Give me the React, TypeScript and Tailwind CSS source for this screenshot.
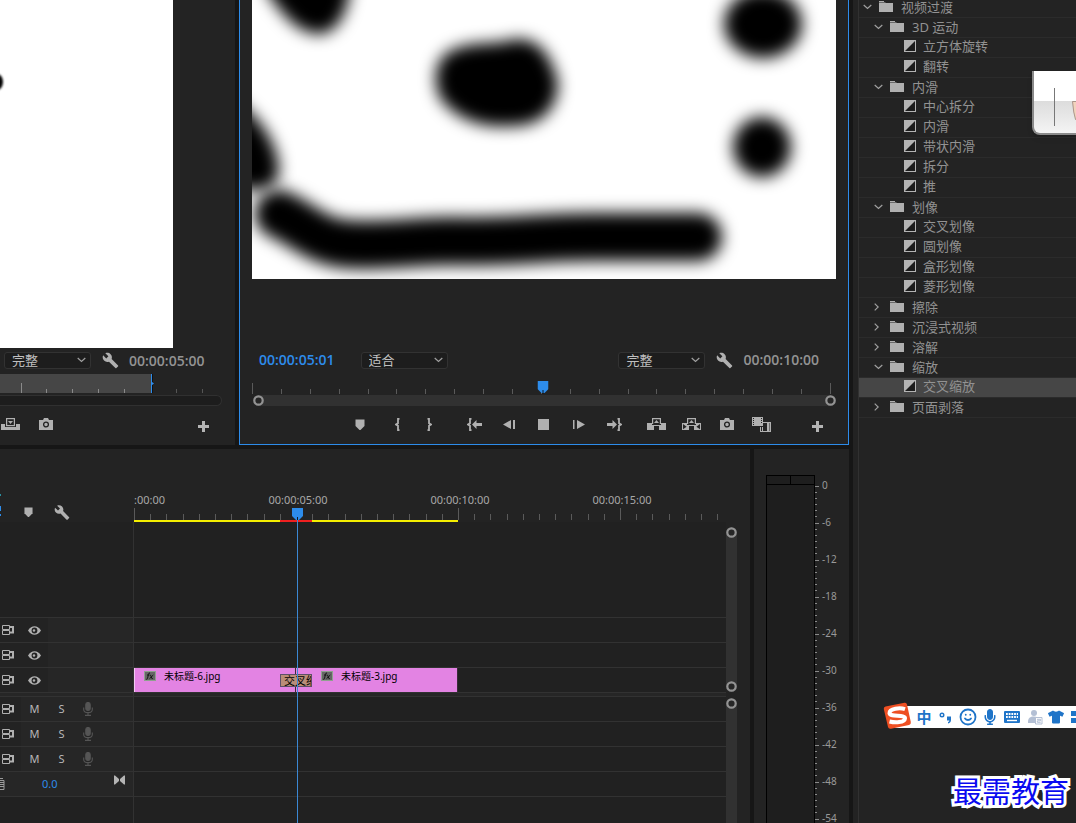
import React from "react";
import { FaMicrophone, FaTshirt } from "react-icons/fa";
import { MdBuild } from "react-icons/md";
import { Smile } from "lucide-react";

const range = (n: number) => Array.from({ length: n }, (_, i) => i);

/* ---------- icons ---------- */

const Chevron = ({ open = true }: { open?: boolean }) =>
  open ? (
    <svg width="9" height="6" viewBox="0 0 9 6" fill="none" stroke="#a0a0a0" strokeWidth="1.2">
      <path d="M.7 1l3.8 3.5L8.3 1" />
    </svg>
  ) : (
    <svg width="5" height="8" viewBox="0 0 5 8" fill="none" stroke="#a0a0a0" strokeWidth="1.2">
      <path d="M.7.6L4.2 4 .7 7.4" />
    </svg>
  );

const Folder = () => (
  <svg width="14" height="11" viewBox="0 0 14 11" fill="#b0b0b0">
    <path d="M0 0h5v1H0zM0 2h14v9H0z" />
    <path d="M0 1h6l1 1H0z" fill="#6a6a6a" />
  </svg>
);

const TransitionIcon = () => (
  <svg width="12" height="12" viewBox="0 0 12 12">
    <rect x=".5" y=".5" width="11" height="11" fill="#1c1c1c" stroke="#b4b4b4" />
    <path d="M0 0h12L0 12z" fill="#b4b4b4" />
  </svg>
);

const MarkerIcon = ({ size = 10 }: { size?: number }) => (
  <svg width={size} height={size + 1} viewBox="0 0 10 11" fill="#b0b0b0">
    <path d="M.5.5h9V7L5.500 11h-1L.5 7z" />
  </svg>
);

const Wrench = () => <MdBuild size={17} color="#b0b0b0" />;

const Ring = () => (
  <svg className="block shrink-0" width="11" height="11" viewBox="0 0 11 11">
    <circle cx="5.5" cy="5.5" r="4.2" fill="#262626" stroke="#939393" strokeWidth="2.2" />
  </svg>
);

const Playhead = () => (
  <svg className="block" width="11" height="13" viewBox="0 0 11 13">
    <path d="M0 0h11v8l-4 4H4L0 8z" fill="#2d8ceb" />
    <path d="M5 9h1v4H5z" fill="#101820" />
  </svg>
);

const CameraIcon = () => (
  <svg width="14" height="12" viewBox="0 0 14 12" fill="#b0b0b0">
    <path d="M0 2h4l1-2h4l1 2h4v10H0z" />
    <circle cx="7" cy="6.5" r="2.4" fill="none" stroke="#232323" strokeWidth="1.3" />
  </svg>
);

const PlusIcon = () => (
  <svg width="11" height="15" viewBox="0 0 11 15" fill="#b4b4b4">
    <path d="M4 4h3v4h4v3H7v4H4v-4H0V8h4z" />
  </svg>
);

const OverwriteIcon = () => (
  <svg width="19" height="12" viewBox="0 0 19 12" fill="#b0b0b0">
    <path d="M0 6h4v3h11V6h4v6H0z" />
    <rect x="5.6" y=".6" width="7.8" height="7" fill="#232323" stroke="#b0b0b0" strokeWidth="1.2" />
    <path d="M7 3h5L9.5 6z" />
  </svg>
);

const BraceOpen = () => (
  <svg width="5" height="13" viewBox="0 0 5 13" fill="none" stroke="#b0b0b0" strokeWidth="1.8">
    <path d="M4.5.8H3v4.4L1 6.5l2 1.3v4.4h1.5" />
  </svg>
);

const BraceClose = () => (
  <svg width="5" height="13" viewBox="0 0 5 13" fill="none" stroke="#b0b0b0" strokeWidth="1.8">
    <path d="M.5.8H2v4.4l2 1.3-2 1.3v4.4H.5" />
  </svg>
);

const GoToIn = () => (
  <svg width="15" height="13" viewBox="0 0 15 13">
    <path d="M4.5.8H3v4.4L1 6.5l2 1.3v4.4h1.5" fill="none" stroke="#b0b0b0" strokeWidth="1.8" />
    <path d="M5 6.5L9.5 2v3H15v3H9.5v3z" fill="#b0b0b0" />
  </svg>
);

const GoToOut = () => (
  <svg width="15" height="13" viewBox="0 0 15 13">
    <path d="M10.5.8H12v4.4l2 1.3-2 1.3v4.4h-1.5" fill="none" stroke="#b0b0b0" strokeWidth="1.8" />
    <path d="M10 6.5L5.5 2v3H0v3h5.5v3z" fill="#b0b0b0" />
  </svg>
);

const StepBack = () => (
  <svg width="12" height="9" viewBox="0 0 12 9" fill="#b0b0b0">
    <path d="M0 4.5L8 0v9zM10 0h2v9h-2z" />
  </svg>
);

const StepForward = () => (
  <svg width="12" height="9" viewBox="0 0 12 9" fill="#b0b0b0">
    <path d="M12 4.5L4 0v9zM0 0h1.5v9H0z" />
  </svg>
);

const StopIcon = () => (
  <svg width="11" height="11" viewBox="0 0 11 11">
    <path d="M0 0h11v11H0z" fill="#b0b0b0" />
  </svg>
);

const LiftIcon = () => (
  <svg width="19" height="12" viewBox="0 0 19 12" fill="#b0b0b0">
    <path d="M0 5h5v2h2v5H0zM14 5h5v7h-7V7h2zM7 7h5v1H7z" />
    <path d="M5.6 6V.6h7.8V6" fill="none" stroke="#b0b0b0" strokeWidth="1.2" />
    <path d="M7 5l2.5-3L12 5z" />
  </svg>
);

const ExtractIcon = () => (
  <svg width="19" height="12" viewBox="0 0 19 12" fill="#b0b0b0">
    <path d="M0 5h5v2h2v5H0zM14 5h5v7h-7V7h2zM7 7h5v1H7z" />
    <path d="M5.6 6V.6h7.8V6" fill="none" stroke="#b0b0b0" strokeWidth="1.2" />
    <path d="M7 5l2.5-3L12 5z" />
    <path d="M1 6l3.6 2.7L1 11.3zM18 6l-3.6 2.7L18 11.3z" fill="#232323" />
  </svg>
);

const ProxyIcon = () => (
  <svg width="19" height="15" viewBox="0 0 19 15">
    <path d="M0 0h11v9H0z" fill="#b0b0b0" />
    <path d="M1.500 1v8M9.500 1v5" stroke="#232323" strokeDasharray="1 1" />
    <path d="M11 5h8v10H8v-5h1v4h1v-4h2V6h-1z" fill="#b0b0b0" />
    <path d="M11 10v4h4V6h-3v4z" fill="#232323" />
    <path d="M9.500 10.500v4M17.500 6.500v8" stroke="#232323" strokeDasharray="1 1" />
  </svg>
);

const SyncIcon = () => (
  <svg width="12" height="10" viewBox="0 0 12 10" fill="none" stroke="#b0b0b0">
    <path d="M.5.5h7v4h-7zM.5 5.500h7v4h-7z" />
    <path d="M8 2h3v5.500H8" strokeWidth="2" />
  </svg>
);

const EyeIcon = () => (
  <svg width="13" height="9" viewBox="0 0 13 9">
    <path d="M0 4.5C2 1.6 4 .3 6.5.3S11 1.6 13 4.5C11 7.4 9 8.7 6.5 8.7S2 7.4 0 4.5z" fill="#b0b0b0" />
    <circle cx="6.500" cy="4.500" r="2.900" fill="#232323" />
    <circle cx="6" cy="4.500" r="1.200" fill="#b0b0b0" />
  </svg>
);

const TrackMic = () => (
  <svg width="10" height="14" viewBox="0 0 10 14" fill="none" stroke="#555555" strokeWidth="1.1">
    <rect x="2.8" y=".5" width="4.4" height="8" rx="2.2" fill="#555555" />
    <path d="M.7 5.5v2c0 4.2 8.6 4.2 8.6 0v-2M5 10.8V13M2 13.4h6" />
  </svg>
);

const BowTie = () => (
  <svg width="11" height="10" viewBox="0 0 11 10" fill="#b4b4b4">
    <path d="M0 .5h1L5 4v2L1 9.500H0zM11 .5h-1L6 4v2l4 3.500h1z" />
  </svg>
);

const MasterIcon = () => (
  <svg width="5" height="12" viewBox="0 0 5 12" stroke="#9a9a9a" fill="none">
    <path d="M0 .5h3M0 2.5h4v9H0M0 4.5h4M0 6.5h4M0 8.5h4" />
  </svg>
);

/* ---------- shared controls ---------- */

function IconButton({ label, className, children }: { label: string; className: string; children: React.ReactNode }) {
  return (
    <button type="button" aria-label={label} className={`flex shrink-0 items-center justify-center ${className}`}>
      {children}
    </button>
  );
}

function Dropdown({ label, value }: { label: string; value: string }) {
  return (
    <label className="grid w-[87px] shrink-0 items-center">
      <select
        aria-label={label}
        defaultValue={value}
        className="col-start-1 row-start-1 h-[17px] w-full appearance-none rounded-[3px] border border-[#323232] bg-[#1d1d1d] pl-[7px] text-[13px] leading-[15px] text-[#c0c0c0]"
      >
        <option>{value}</option>
      </select>
      <span className="pointer-events-none col-start-1 row-start-1 mr-[5px] justify-self-end">
        <Chevron />
      </span>
    </label>
  );
}

const Timecode = ({ value, active }: { value: string; active?: boolean }) => (
  <span
    className={`font-['Open_Sans','Noto_Sans',sans-serif] text-[14px] leading-5 font-semibold whitespace-nowrap ${active ? "text-[#2d8ceb]" : "text-[#939393]"}`}
  >
    {value}
  </span>
);

/* ---------- monitors ---------- */

function SourceMonitor() {
  return (
    <section className="w-[235px] shrink-0 bg-[#232323]">
      <svg className="block" width="173" height="348" viewBox="0 0 173 348">
        <rect width="173" height="348" fill="#fff" />
        <ellipse cx="-3" cy="82" rx="6" ry="8" fill="#000" className="blur-[1px]" />
      </svg>
      <div className="flex h-6 items-center pl-1">
        <Dropdown label="回放分辨率" value="完整" />
        <IconButton label="设置" className="ml-2.5 h-5 w-[18px]">
          <Wrench />
        </IconButton>
        <span className="ml-2.5">
          <Timecode value="00:00:05:00" />
        </span>
      </div>
      <svg className="mt-0.5 block" width="222" height="20" viewBox="0 0 222 20">
        <path d="M0 0h151v19H0z" fill="#464646" />
        <path d="M21 9h1v10h-1zM46 15h1v4h-1zM72 15h1v4h-1zM98 15h1v4h-1zM124 15h1v4h-1z" fill="#8a8a8a" />
        <path d="M176 15h1v4h-1zM202 15h1v4h-1z" fill="#555" />
        <path d="M151 0h1v19h-1zM152 8l2 1.5-2 1.5z" fill="#2d8ceb" />
        <path d="M152 0h1v8h-1zM152 11h1v8h-1z" fill="#111" />
      </svg>
      <div className="mt-px mr-[13px] h-[11px] rounded-r-full border border-l-0 border-[#303030] bg-[#1d1d1d]" />
      <div className="flex h-9 items-center">
        <IconButton label="覆盖" className="h-6 w-[21px]">
          <OverwriteIcon />
        </IconButton>
        <IconButton label="导出帧" className="ml-[7px] h-6 w-[35px]">
          <CameraIcon />
        </IconButton>
        <IconButton label="按钮编辑器" className="mr-[21px] ml-auto h-6 w-[21px]">
          <PlusIcon />
        </IconButton>
      </div>
    </section>
  );
}

function ProgramMonitor() {
  return (
    <section className="min-w-0 flex-1 border border-t-0 border-[#2d8ceb] bg-[#232323] pb-0.5">
      <div className="px-3">
        <svg className="block h-[279px] w-full" viewBox="0 0 584 279" preserveAspectRatio="xMidYMid slice">
          <defs>
            <filter id="soft" filterUnits="userSpaceOnUse" x="-60" y="-60" width="720" height="400" colorInterpolationFilters="sRGB">
              <feGaussianBlur stdDeviation="8" />
            </filter>
          </defs>
          <rect width="584" height="279" fill="#fff" />
          <g filter="url(#soft)" fill="#000">
            <path d="M10-40H98C102 0 90 32 68 34 45 34 28 12 14-10z" />
            <path d="M206 48C224 41 246 45 263 39 290 37 300 60 306 82 306 108 290 126 260 126 230 128 205 120 188 98 180 80 182 54 206 48z" />
            <ellipse cx="511" cy="24" rx="39" ry="34" />
            <ellipse cx="510" cy="147" rx="29" ry="30" />
            <path d="M-30 92C8 112 26 145 27 170 26 192 5 194-30 184z" />
          </g>
          <path
            d="M27 214C50 224 65 242 95 244 130 247 165 241 200 241 250 243 290 237 340 237L446 237"
            fill="none"
            stroke="#000"
            strokeWidth="48"
            strokeLinecap="round"
            strokeLinejoin="round"
            filter="url(#soft)"
          />
        </svg>
      </div>
      <div className="mt-[69px] flex h-6 items-center pr-[29px] pl-[19px]">
        <Timecode value="00:00:05:01" active />
        <span className="ml-[26px]">
          <Dropdown label="选择缩放级别" value="适合" />
        </span>
        <span className="ml-auto">
          <Dropdown label="回放分辨率" value="完整" />
        </span>
        <IconButton label="设置" className="mx-2.5 h-5 w-[18px]">
          <Wrench />
        </IconButton>
        <Timecode value="00:00:10:00" />
      </div>
      <div className="relative mt-0.5 mr-[17px] ml-3 flex h-5 items-end justify-between">
        {range(21).map((i) => (
          <span key={i} className={`w-px bg-[#5a5a5a] ${i % 20 === 0 ? "h-[11px]" : "h-[5px]"}`} />
        ))}
        <span className="absolute bottom-0 left-[50.3%] -translate-x-1/2">
          <Playhead />
        </span>
      </div>
      <div className="mr-3 ml-[13px] mt-px flex h-[11px] justify-between rounded-full bg-[#313131]">
        <Ring />
        <Ring />
      </div>
      <div className="flex h-9 items-center pr-5 pl-[102px]">
        <IconButton label="添加标记" className="h-6 w-[35px]"><MarkerIcon /></IconButton>
        <IconButton label="标记入点" className="ml-1 h-6 w-8"><BraceOpen /></IconButton>
        <IconButton label="标记出点" className="h-6 w-8"><BraceClose /></IconButton>
        <IconButton label="转到入点" className="ml-3 h-6 w-[35px]"><GoToIn /></IconButton>
        <IconButton label="后退一帧" className="h-6 w-[34px]"><StepBack /></IconButton>
        <IconButton label="停止" className="h-6 w-[35px]"><StopIcon /></IconButton>
        <IconButton label="前进一帧" className="h-6 w-[36px]"><StepForward /></IconButton>
        <IconButton label="转到出点" className="h-6 w-[34px]"><GoToOut /></IconButton>
        <IconButton label="提升" className="ml-2 h-6 w-[35px]"><LiftIcon /></IconButton>
        <IconButton label="提取" className="h-6 w-[35px]"><ExtractIcon /></IconButton>
        <IconButton label="导出帧" className="h-6 w-[35px]"><CameraIcon /></IconButton>
        <IconButton label="切换代理" className="h-6 w-[35px]"><ProxyIcon /></IconButton>
        <IconButton label="按钮编辑器" className="ml-auto h-6 w-[21px]"><PlusIcon /></IconButton>
      </div>
    </section>
  );
}

/* ---------- timeline ---------- */

function VideoHeader() {
  return (
    <div className="flex h-[25px] border-t border-[#323232] bg-[#262626]">
      <div className="flex w-12 items-center bg-[#232323] pl-0.5">
        <IconButton label="同步锁定" className="h-5 w-3"><SyncIcon /></IconButton>
        <IconButton label="切换轨道输出" className="ml-3.5 h-5 w-[13px]"><EyeIcon /></IconButton>
      </div>
    </div>
  );
}

function AudioHeader() {
  return (
    <div className="flex h-[25px] items-center border-t border-[#323232] bg-[#262626] text-[11px] text-[#b8b8b8]">
      <div className="flex w-[21px] items-center self-stretch bg-[#232323] pl-0.5">
        <IconButton label="同步锁定" className="h-5 w-3"><SyncIcon /></IconButton>
      </div>
      <button type="button" className="w-[27px] text-center">M</button>
      <button type="button" className="w-[27px] text-center">S</button>
      <IconButton label="画外音录制" className="h-5 w-[26px]"><TrackMic /></IconButton>
    </div>
  );
}

const FxBadge = () => (
  <svg className="block shrink-0" width="12" height="10" viewBox="0 0 12 10" fill="none">
    <rect x=".5" y=".5" width="11" height="9" fill="#666" stroke="#8fa08f" />
    <path d="M6 2Q4.800 1.600 4.400 3.500L3.500 7.500Q3.200 8.600 2.300 8.200M3 4h2.500M6 4q1 0 1.300 2t1.500 1.700M9.300 4L5.500 7.700" stroke="#151515" />
  </svg>
);

function TimelineRuler() {
  return (
    <div className="relative h-[73px] pt-[43px]">
      <div className="flex h-4 text-[11px] leading-4 text-[#a8a8a8]">
        <span className="w-[83px]">:00:00</span>
        <span className="w-[162px] text-center">00:00:05:00</span>
        <span className="w-[162px] text-center">00:00:10:00</span>
        <span className="w-[162px] text-center">00:00:15:00</span>
      </div>
      <svg className="block" width="592" height="14" viewBox="0 0 592 14">
        {range(37).map((i) => (
          <rect key={i} x={Math.round(i * 16.2)} y={i % 10 === 0 ? 0 : 6} width="1" height={i % 10 === 0 ? 12 : 6} fill="#5a5a5a" />
        ))}
        <path d="M0 12h324v2H0z" fill="#f4ee00" />
        <path d="M146 12h32v2h-32z" fill="#f02020" />
      </svg>
      <span className="absolute bottom-px left-[158px]">
        <Playhead />
      </span>
    </div>
  );
}

function Timeline() {
  return (
    <section className="flex min-w-0 flex-1 bg-[#232323]">
      <div className="flex w-[133px] shrink-0 flex-col">
        <div className="flex h-[73px] items-end pb-0.5">
          <svg width="2" height="30" viewBox="0 0 2 30">
            <path d="M0 4h1v2H0z" fill="#2a8fa0" />
            <path d="M0 16h1v5H0zM0 24h1v2H0z" fill="#2d8ceb" />
          </svg>
          <IconButton label="添加标记" className="ml-[18px] h-4 w-4"><MarkerIcon size={9} /></IconButton>
          <IconButton label="时间轴显示设置" className="ml-[18px] h-4 w-4"><Wrench /></IconButton>
        </div>
        <div className="flex flex-1 flex-col bg-[#212121]">
          <div className="h-[95px]" />
          <VideoHeader />
          <VideoHeader />
          <VideoHeader />
          <div className="h-1 border-t border-[#323232] bg-[#262626]" />
          <AudioHeader />
          <AudioHeader />
          <AudioHeader />
          <div className="flex h-[26px] items-center border-y border-[#323232] bg-[#262626]">
            <MasterIcon />
            <span className="ml-[37px] text-[11px] text-[#2d8ceb]">0.0</span>
            <span className="mr-2 mb-2 ml-auto"><BowTie /></span>
          </div>
        </div>
      </div>

      <div className="relative flex min-w-0 flex-1 flex-col overflow-hidden pl-px">
        <TimelineRuler />
        <div className="-ml-px flex flex-1 flex-col border-l border-[#323232] bg-[#212121]">
          <div className="h-[95px]" />
          <div className="h-[25px] border-t border-[#323232]" />
          <div className="h-[25px] border-t border-[#323232]" />
          <div className="relative flex h-[25px] border-t border-[#323232]">
            <div className="flex w-[162px] border-r border-l border-r-[#3a2a3a] border-l-[#f3c8f3] bg-[#e383e3] pt-[3px] pl-[9px]">
              <FxBadge />
              <span className="ml-2 text-[10px] leading-[10px] whitespace-nowrap text-black">未标题-6.jpg</span>
            </div>
            <div className="flex w-[162px] border-r border-[#3a2a3a] bg-[#e383e3] pt-[3px] pl-[25px]">
              <FxBadge />
              <span className="ml-2 text-[10px] leading-[10px] whitespace-nowrap text-black">未标题-3.jpg</span>
            </div>
            <div className="absolute top-1.5 left-[146px] h-[13px] w-8 overflow-hidden border border-[#5d5168] bg-[#b98d78] pl-[3px] text-[11px] leading-[11px] whitespace-nowrap text-black">
              交叉缩
            </div>
          </div>
          <div className="h-1 border-t border-[#323232] bg-[#262626]" />
          <div className="h-[25px] border-t border-[#323232]" />
          <div className="h-[25px] border-t border-[#323232]" />
          <div className="h-[25px] border-t border-[#323232]" />
          <div className="h-[26px] border-y border-[#323232]" />
        </div>
        <div className="absolute top-[71px] bottom-0 left-[164px] w-px bg-[#3b88d4]" />
      </div>

      <div className="mr-[13px] flex w-[11px] shrink-0 flex-col pt-[78px]">
        <div className="flex h-[165px] flex-col justify-between rounded-full bg-[#313131]">
          <Ring />
          <Ring />
        </div>
        <div className="mt-1.5 flex-1 rounded-t-full bg-[#313131]">
          <Ring />
        </div>
      </div>
    </section>
  );
}

function AudioMeters() {
  return (
    <section className="flex w-[95px] shrink-0 overflow-hidden bg-[#232323] pt-[26px] pl-3">
      <div className="flex w-[49px] flex-col border border-b-0 border-black bg-[#1e1e1e]">
        <div className="flex h-[9px] border-b border-black">
          <div className="w-6 border-r border-black" />
        </div>
      </div>
      <svg className="block" width="5" height="348" viewBox="0 0 5 348">
        {range(55).map((i) => (
          <rect key={i} x="0" y={Math.round(10.5 + (i * 37) / 6)} width={i % 6 === 0 ? 4 : 2} height="1" fill="#8a8a8a" />
        ))}
      </svg>
      <div className="-mt-2 ml-0.5 text-[10px] text-[#999999]">
        {range(10).map((i) => (
          <div key={i} className="flex h-[37px] items-center">
            {i === 0 ? "0" : `-${i * 6}`}
          </div>
        ))}
      </div>
    </section>
  );
}

/* ---------- effects browser ---------- */

type Row = { level: 1 | 2 | 3; text: string; open?: boolean; selected?: boolean };

const rows: Row[] = [
  { level: 1, text: "视频过渡", open: true },
  { level: 2, text: "3D 运动", open: true },
  { level: 3, text: "立方体旋转" },
  { level: 3, text: "翻转" },
  { level: 2, text: "内滑", open: true },
  { level: 3, text: "中心拆分" },
  { level: 3, text: "内滑" },
  { level: 3, text: "带状内滑" },
  { level: 3, text: "拆分" },
  { level: 3, text: "推" },
  { level: 2, text: "划像", open: true },
  { level: 3, text: "交叉划像" },
  { level: 3, text: "圆划像" },
  { level: 3, text: "盒形划像" },
  { level: 3, text: "菱形划像" },
  { level: 2, text: "擦除" },
  { level: 2, text: "沉浸式视频" },
  { level: 2, text: "溶解" },
  { level: 2, text: "缩放", open: true },
  { level: 3, text: "交叉缩放", selected: true },
  { level: 2, text: "页面剥落" },
];

const indent = { 1: "pl-1 pb-0.5", 2: "pl-[15px] pb-0.5", 3: "pl-[45px] pb-[3px]" };

function EffectsPanel() {
  return (
    <aside className="w-[223px] shrink-0 overflow-hidden bg-[#232323] pl-[5px]">
      <ul className="-mt-[3px] border-l border-[#313131] pb-[450px]">
        {rows.map((r, i) => (
          <li
            key={i}
            className={`flex h-5 items-center border-t border-[#2b2b2b] text-[13px] leading-4 text-[#929292] ${indent[r.level]} ${r.selected ? "bg-[#464646]" : ""}`}
          >
            {r.level === 3 ? (
              <TransitionIcon />
            ) : (
              <>
                <button type="button" aria-label={r.text} className="flex w-4 shrink-0">
                  <Chevron open={!!r.open} />
                </button>
                <Folder />
              </>
            )}
            <span className={r.level === 3 ? "ml-[7px]" : "ml-2"}>{r.text}</span>
          </li>
        ))}
        <li className="border-t border-[#2b2b2b]" />
      </ul>
    </aside>
  );
}

/* ---------- floating windows ---------- */

function MagnifierPopup() {
  return (
    <div className="absolute top-[71px] right-0 h-16 w-11 overflow-hidden rounded-bl-lg border-b-2 border-l-2 border-[#8a8a8a] bg-linear-to-b from-white from-48% via-[#dcdcdc] via-48% to-[#f4f4f4] shadow-md">
      <svg width="42" height="62" viewBox="0 0 42 62">
        <path d="M20 17h1v38h-1z" fill="#777" />
        <path d="M38.500 30.500h5v18h-2q-2-6-3-18z" fill="#f2d3bd" stroke="#9b8478" strokeWidth=".8" />
      </svg>
    </div>
  );
}

function InputMethodBar() {
  return (
    <div className="absolute top-[702px] right-0 flex h-[29px] w-[193px] items-center overflow-hidden text-[#1f74c8]">
      <div className="ml-[11px] flex h-[22px] flex-1 items-center overflow-hidden bg-white pl-[19px]">
        <span className="w-[22px] shrink-0 text-center text-[15px] leading-[22px] font-bold">中</span>
        <svg className="shrink-0" width="22" height="22" viewBox="0 0 22 22">
          <circle cx="7" cy="9" r="1.8" fill="none" stroke="currentColor" strokeWidth="1.4" />
          <path d="M12 10.500h4v3.500c0 2-1 3-3 3.500v-1.500c1-.3 1.300-.8 1.300-1.500H12z" fill="currentColor" />
        </svg>
        <span className="flex w-[22px] shrink-0 justify-center"><Smile size={18} strokeWidth={2.4} /></span>
        <span className="flex w-[22px] shrink-0 justify-center"><FaMicrophone size={16} /></span>
        <svg className="shrink-0" width="22" height="22" viewBox="0 0 22 22">
          <rect x="3" y="5" width="16" height="12" rx="1" fill="currentColor" />
          <path d="M5 8h12M5 11h12" stroke="#fff" strokeWidth="1.8" strokeDasharray="1.8 .9" />
          <path d="M6 14.500h10" stroke="#fff" strokeWidth="1.400" />
        </svg>
        <svg className="shrink-0" width="22" height="22" viewBox="0 0 22 22" fill="#b3bfd4">
          <circle cx="11" cy="7" r="3" />
          <path d="M5 16c0-4 2-5.500 6-5.500 3 0 4 1 4.500 2.500V17H5z" />
          <path d="M12.500 11.500h6.500v6.500h-6.500z" fill="#fff" stroke="#b3bfd4" />
          <path d="M14 13.300h3.500v1.500H14.300v1.500h3.400" fill="none" stroke="#b3bfd4" />
        </svg>
        <span className="flex w-[22px] shrink-0 justify-center"><FaTshirt size={16} /></span>
        <svg className="shrink-0" width="22" height="22" viewBox="0 0 22 22" fill="currentColor">
          <path d="M4 5h6v5H4zM4 12h6v5H4zM12 5h6v5h-6zM12 12h6v5h-6z" />
        </svg>
      </div>
      <svg className="absolute top-0 left-0" width="29" height="28" viewBox="0 0 29 28">
        <path d="M2.500 4.500L21.500 .7Q23.500.3 24 2.500L27.800 20Q28.200 22.500 26 23L8 26.700Q5.500 27.200 5 25L.8 7Q.4 5 2.500 4.500z" fill="#ee4f22" />
        <path
          d="M22 7.200C17 5.500 6.500 6.500 6.500 11.200 7.500 15.500 22.500 12 22 16.500 21.500 20.800 12 20.800 6.500 19.500"
          fill="none"
          stroke="#fff"
          strokeWidth="4"
        />
      </svg>
    </div>
  );
}

export default function App() {
  return (
    <div className="relative flex h-screen overflow-hidden bg-[#161616] font-['Noto_Sans','Noto_Sans_CJK_SC',sans-serif]">
      <main className="mr-1 flex min-w-0 flex-1 flex-col gap-1">
        <div className="flex gap-1">
          <SourceMonitor />
          <ProgramMonitor />
        </div>
        <div className="flex min-h-0 flex-1 gap-1">
          <Timeline />
          <AudioMeters />
        </div>
      </main>
      <EffectsPanel />
      <MagnifierPopup />
      <InputMethodBar />
      <p className="absolute right-[7px] bottom-[11px] text-[29px] leading-10 font-normal whitespace-nowrap text-[#0a0af0] [-webkit-text-stroke:6px_white] [paint-order:stroke] [stroke-linejoin:round]">
        最需教育
      </p>
    </div>
  );
}
